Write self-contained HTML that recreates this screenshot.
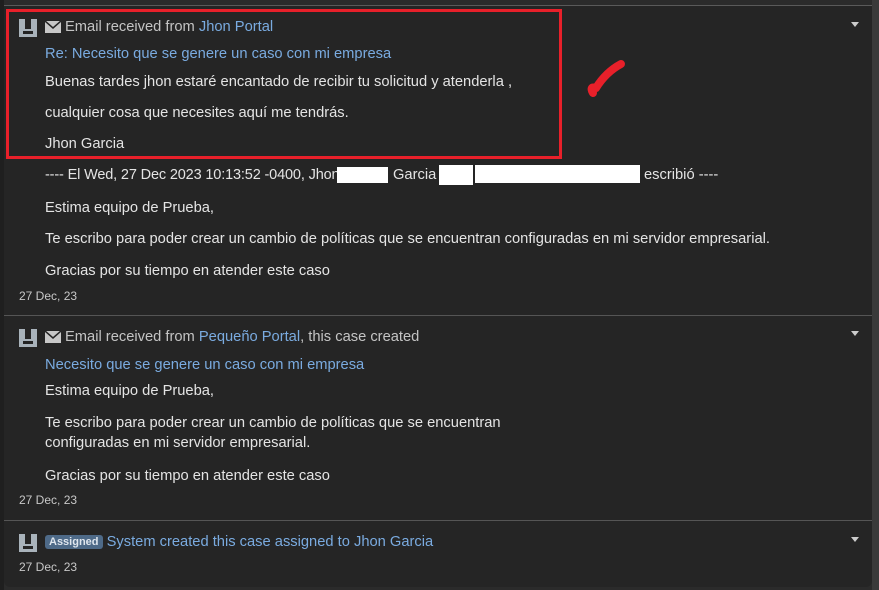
<!DOCTYPE html>
<html><head><meta charset="utf-8"><style>
*{margin:0;padding:0;box-sizing:border-box}
body{width:879px;height:590px;background:#2b2b2b;position:relative;overflow:hidden;font-family:"Liberation Sans",sans-serif;font-size:14.7px;color:#e4e4e4}
.panel{position:absolute;left:4px;top:5px;width:868px;height:582px;background:#252525;border-radius:0 0 6px 6px;border-top:1px solid #5a5a5a}
.sep{position:absolute;left:4px;width:868px;height:1px;background:#555}
.t{position:absolute;white-space:nowrap}
.g{color:#c4c4c4}.b{color:#7aabe0}.d{color:#c8c8c8;font-size:12px}
.av{position:absolute;width:18px;height:18px;background:#a9b3bb}
.av:before{content:"";position:absolute;left:6px;top:0;width:6px;height:10px;background:#252525}
.av:after{content:"";position:absolute;left:4px;top:12px;width:10px;height:3px;background:#252525}
.car{position:absolute;width:0;height:0;border-left:4px solid transparent;border-right:4px solid transparent;border-top:5px solid #ccc}
.w{position:absolute;background:#fff}
.badge{display:inline-block;background:#4e6a88;color:#dfe6ee;font-size:11px;font-weight:bold;padding:1px 4px;border-radius:3px;vertical-align:1px}
</style></head><body>
<div class="panel"></div>
<div style="position:absolute;left:0;top:0;width:4px;height:590px;background:#1f1f1f"></div>
<div style="position:absolute;left:872px;top:0;width:7px;height:590px;background:#3a3a3a"></div>
<div class="sep" style="top:315px"></div>
<div class="sep" style="top:520px"></div>

<div style="position:absolute;left:6px;top:9px;width:556px;height:150px;border:3px solid #e8202a"></div>
<svg style="position:absolute;left:584px;top:58px" width="46" height="46"><path d="M9 35 Q5 28 12 30 Q22 14 37 6" stroke="#e8202a" stroke-width="8" fill="none" stroke-linecap="round" stroke-linejoin="round"/></svg>

<div class="av" style="left:19px;top:19px"></div>
<svg style="position:absolute;left:45px;top:21px" width="16" height="12"><rect width="16" height="12" fill="#c8c8c8"/><path d="M0 0 L8 7 L16 0" stroke="#252525" stroke-width="1.5" fill="none"/></svg>
<div class="t g" style="left:65px;top:19px">Email received from <span class="b">Jhon Portal</span></div>
<div class="car" style="left:851px;top:22px"></div>
<div class="t b" style="left:45px;top:46px">Re: Necesito que se genere un caso con mi empresa</div>
<div class="t" style="left:45px;top:74px">Buenas tardes jhon estaré encantado de recibir tu solicitud y atenderla ,</div>
<div class="t" style="left:45px;top:105px">cualquier cosa que necesites aquí me tendrás.</div>
<div class="t" style="left:45px;top:136px">Jhon Garcia</div>
<div class="t" style="left:45px;top:167px;font-size:14.5px;letter-spacing:-0.15px">---- El Wed, 27 Dec 2023 10:13:52 -0400, Jhon</div>
<div class="t" style="left:393px;top:167px">Garcia</div>
<div class="t" style="left:644px;top:167px">escribió ----</div>
<div class="w" style="left:337px;top:167px;width:51px;height:16px"></div>
<div class="w" style="left:439px;top:165px;width:34px;height:20px"></div>
<div class="w" style="left:475px;top:165px;width:165px;height:18px"></div>
<div class="t" style="left:45px;top:200px">Estima equipo de Prueba,</div>
<div class="t" style="left:45px;top:231px">Te escribo para poder crear un cambio de políticas que se encuentran configuradas en mi servidor empresarial.</div>
<div class="t" style="left:45px;top:263px">Gracias por su tiempo en atender este caso</div>
<div class="t d" style="left:19px;top:289px">27 Dec, 23</div>

<div class="av" style="left:19px;top:329px"></div>
<svg style="position:absolute;left:45px;top:331px" width="16" height="12"><rect width="16" height="12" fill="#c8c8c8"/><path d="M0 0 L8 7 L16 0" stroke="#252525" stroke-width="1.5" fill="none"/></svg>
<div class="t g" style="left:65px;top:329px">Email received from <span class="b">Pequeño Portal</span>, this case created</div>
<div class="car" style="left:851px;top:331px"></div>
<div class="t b" style="left:45px;top:357px">Necesito que se genere un caso con mi empresa</div>
<div class="t" style="left:45px;top:383px">Estima equipo de Prueba,</div>
<div class="t" style="left:45px;top:415px">Te escribo para poder crear un cambio de políticas que se encuentran</div>
<div class="t" style="left:45px;top:435px">configuradas en mi servidor empresarial.</div>
<div class="t" style="left:45px;top:468px">Gracias por su tiempo en atender este caso</div>
<div class="t d" style="left:19px;top:493px">27 Dec, 23</div>

<div class="av" style="left:19px;top:534px"></div>
<div class="t g" style="left:45px;top:534px"><span class="badge">Assigned</span> <span class="b">System created this case assigned to Jhon Garcia</span></div>
<div class="car" style="left:851px;top:537px"></div>
<div class="t d" style="left:19px;top:560px">27 Dec, 23</div>
</body></html>
